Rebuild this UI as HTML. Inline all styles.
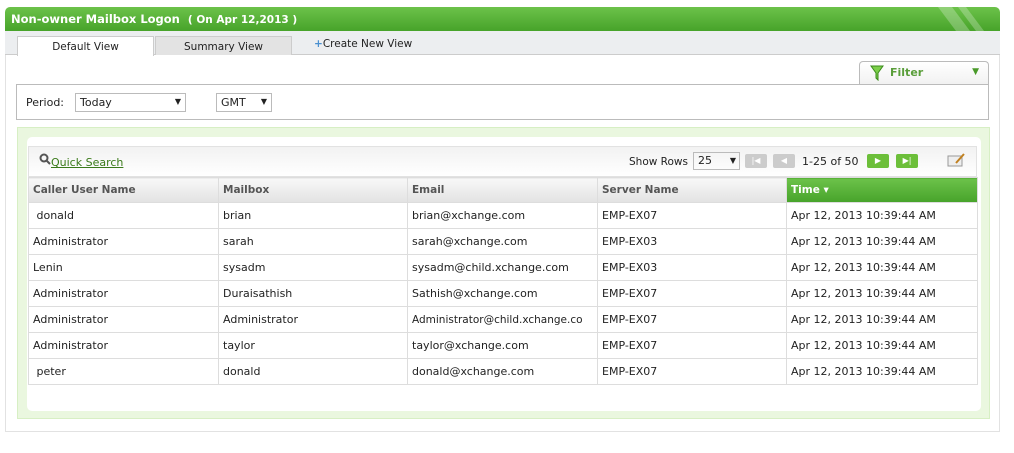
<!DOCTYPE html><html><head><style>
*{margin:0;padding:0;box-sizing:border-box}
body{width:1014px;height:453px;background:#fff;font-family:"DejaVu Sans",Verdana,sans-serif;font-size:11px;color:#222;position:relative;overflow:hidden}
.a{position:absolute}
.title{left:5px;top:7px;width:995px;height:24px;background:linear-gradient(#6cc24a,#47a32a);border-radius:5px 5px 0 0;color:#fff;font-weight:bold;font-size:11.5px;padding:5px 6px}
.title small{font-size:10.5px;margin-left:8px}
.tabs{left:5px;top:31px;width:995px;height:24px;background:#eceef0;border-bottom:1px solid #ccc}
.panel{left:5px;top:55px;width:995px;height:377px;border:1px solid #e2e2e2;border-top:none}
.tab{top:36px;height:20px;border:1px solid #ccc;border-bottom:none;text-align:center;padding-top:4px;font-size:10.5px}
table{border-collapse:collapse;position:absolute;left:28px;top:177px;width:949px;table-layout:fixed}
td,th{border:1px solid #ddd;height:26px;padding-left:4px;text-align:left;font-size:11px;white-space:nowrap;overflow:hidden}
th{height:25px;background:linear-gradient(#f8f8f8,#e2e2e2);color:#555;font-size:10.5px}
.btn{top:154px;width:22px;height:14px;border-radius:2px;color:#fff;font-size:8px;text-align:center;line-height:14px}
</style></head><body>
<div class="a title">Non-owner Mailbox Logon<small>( On Apr 12,2013 )</small></div>
<svg class="a" style="left:930px;top:7px" width="60" height="24"><path d="M8 0h14l18 24H26z M28 0h8l18 24h-8z" fill="#fff" opacity=".25"/></svg>
<div class="a tabs"></div>
<div class="a panel"></div>
<div class="a tab" style="left:17px;width:137px;background:#fff;height:20px">Default View</div>
<div class="a tab" style="left:155px;width:137px;background:#e3e3e3;height:19px">Summary View</div>
<div class="a" style="left:314px;top:38px;font-size:10.5px"><span style="color:#4a90d0;font-weight:bold">+</span>Create New View</div>
<div class="a" style="left:859px;top:61px;width:130px;height:24px;border:1px solid #bbb;border-bottom:none;border-radius:4px 4px 0 0;background:linear-gradient(#fff,#f1f1f1);color:#5a9e3a;font-weight:bold;padding:4px 0 0 30px">Filter<span style="position:absolute;right:9px;top:5px;font-size:9px;color:#4a9a2a">▼</span>
<svg style="position:absolute;left:10px;top:3px" width="14" height="16"><path d="M1 1h12L8 8v7L6 13V8z" fill="#7ccf4a" stroke="#3a8a1a"/></svg></div>
<div class="a" style="left:16px;top:84px;width:973px;height:36px;border:1px solid #bbb"></div>
<div class="a" style="left:26px;top:96px">Period:</div>
<div class="a" style="left:75px;top:93px;width:111px;height:19px;border:1px solid #bbb;padding:2px 4px">Today<span style="position:absolute;right:4px;top:3px;font-size:8px">▼</span></div>
<div class="a" style="left:216px;top:93px;width:56px;height:19px;border:1px solid #bbb;padding:2px 4px">GMT<span style="position:absolute;right:4px;top:3px;font-size:8px">▼</span></div>
<div class="a" style="left:17px;top:127px;width:973px;height:292px;background:#eaf7df;border:1px solid #d7efc4"></div>
<div class="a" style="left:27px;top:137px;width:954px;height:274px;background:#fff;border-radius:5px"></div>
<div class="a" style="left:28px;top:146px;width:949px;height:31px;background:linear-gradient(#f2f2f2,#fff);border:1px solid #e2e2e2"></div>
<svg class="a" style="left:39px;top:153px" width="12" height="12"><circle cx="5" cy="5" r="3.5" fill="none" stroke="#555" stroke-width="2"/><path d="M7.5 7.5l3.5 3.5" stroke="#555" stroke-width="2"/></svg>
<div class="a" style="left:51px;top:156px;color:#3a7a1a;text-decoration:underline">Quick Search</div>
<div class="a" style="left:629px;top:156px;font-size:10.5px">Show Rows</div>
<div class="a" style="left:693px;top:152px;width:47px;height:18px;border:1px solid #bbb;padding:1px 4px">25<span style="position:absolute;right:3px;top:3px;font-size:8px">▼</span></div>
<div class="a btn" style="left:745px;background:#ccc">|◀</div>
<div class="a btn" style="left:773px;background:#ccc">◀</div>
<div class="a" style="left:802px;top:155px">1-25 of 50</div>
<div class="a btn" style="left:867px;background:#6cbf3a">▶</div>
<div class="a btn" style="left:896px;background:#6cbf3a">▶|</div>
<svg class="a" style="left:947px;top:153px" width="20" height="14"><rect x="1" y="3" width="14" height="10" fill="#eee" stroke="#999"/><path d="M9 10l8-9" stroke="#c08020" stroke-width="2"/></svg>
<table>
<colgroup><col style="width:190px"><col style="width:189px"><col style="width:190px"><col style="width:189px"><col style="width:191px"></colgroup>
<tr><th>Caller User Name</th><th>Mailbox</th><th>Email</th><th>Server Name</th><th style="background:linear-gradient(#6cc24a,#47a32a);color:#fff">Time ▾</th></tr>
<tr><td>&nbsp;donald</td><td>brian</td><td>brian@xchange.com</td><td>EMP-EX07</td><td>Apr 12, 2013 10:39:44 AM</td></tr>
<tr><td>Administrator</td><td>sarah</td><td>sarah@xchange.com</td><td>EMP-EX03</td><td>Apr 12, 2013 10:39:44 AM</td></tr>
<tr><td>Lenin</td><td>sysadm</td><td>sysadm@child.xchange.com</td><td>EMP-EX03</td><td>Apr 12, 2013 10:39:44 AM</td></tr>
<tr><td>Administrator</td><td>Duraisathish</td><td>Sathish@xchange.com</td><td>EMP-EX07</td><td>Apr 12, 2013 10:39:44 AM</td></tr>
<tr><td>Administrator</td><td>Administrator</td><td style="font-size:10.5px">Administrator@child.xchange.co</td><td>EMP-EX07</td><td>Apr 12, 2013 10:39:44 AM</td></tr>
<tr><td>Administrator</td><td>taylor</td><td>taylor@xchange.com</td><td>EMP-EX07</td><td>Apr 12, 2013 10:39:44 AM</td></tr>
<tr><td>&nbsp;peter</td><td>donald</td><td>donald@xchange.com</td><td>EMP-EX07</td><td>Apr 12, 2013 10:39:44 AM</td></tr>
</table>
</body></html>
